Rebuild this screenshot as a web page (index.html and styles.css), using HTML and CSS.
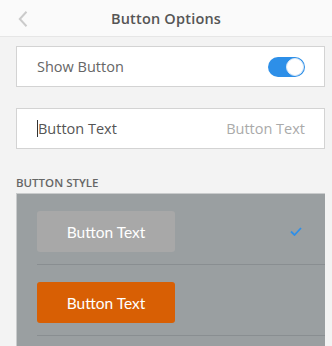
FILE: index.html
```html
<!DOCTYPE html>
<html lang="en">

<head>
  <meta charset="UTF-8">
  <meta name="viewport" content="width=device-width, initial-scale=1.0">
  <title>Button Options</title>
  <link rel="stylesheet" href="styles.css">
</head>

<body>
  <div class="header">
    <span class="back">
      <svg width="10" height="16" viewBox="0 0 10 16">
        <path d="M8.5 0.8 L1.8 8 L8.5 15.2" fill="none" stroke="#cbcbcb" stroke-width="2" />
      </svg>
    </span>
    <h1>Button Options</h1>
  </div>

  <div class="content">
    <div class="field">
      <span class="label">Show Button</span>
      <span class="toggle"><span class="knob"></span></span>
    </div>

    <div class="field text-field">
      <span class="value"><span class="caret"></span>Button Text</span>
      <span class="hint">Button Text</span>
    </div>

    <div class="section-title">BUTTON STYLE</div>

    <div class="styles-panel">
      <div class="style-row">
        <span class="btn btn-gray">Button Text</span>
        <svg class="check" width="12" height="9" viewBox="0 0 12 9">
          <path d="M1 4.5 L4.5 8 L11 1" fill="none" stroke="#2f8fe8" stroke-width="1.8" />
        </svg>
      </div>
      <div class="style-row">
        <span class="btn btn-orange">Button Text</span>
      </div>
    </div>
  </div>
</body>

</html>
```

FILE: styles.css
```css
body {
  margin: 0;
  padding: 0;
  font-family: "Open Sans", Arial, sans-serif;
  background: #f3f3f3;
  overflow: hidden;
}

.header {
  height: 36px;
  background: #fafafa;
  border-bottom: 1px solid #e6e6e6;
  display: flex;
  align-items: center;
  justify-content: center;
  position: relative;
}

.back {
  position: absolute;
  left: 18px;
  top: 10px;
}

h1 {
  margin: 0;
  font-size: 14.5px;
  font-weight: 600;
  color: #555;
  letter-spacing: 0.2px;
}

.content {
  padding: 9px 7px 0 16px;
}

.field {
  height: 39px;
  background: #fff;
  border: 1px solid #d3d3d3;
  display: flex;
  align-items: center;
  justify-content: space-between;
  padding: 0 19px 0 20px;
  margin-bottom: 21px;
  font-size: 14.5px;
  color: #666;
}

.toggle {
  width: 37px;
  height: 20px;
  border-radius: 10px;
  background: #2d8fe8;
  position: relative;
}

.knob {
  position: absolute;
  right: 1px;
  top: 1px;
  width: 16px;
  height: 16px;
  border-radius: 50%;
  background: #fff;
  border: 1px solid #d9e8f7;
}

.text-field {
  margin-bottom: 26px;
}

.value {
  color: #555;
  display: flex;
  align-items: center;
}

.caret {
  width: 1px;
  height: 17px;
  background: #333;
}

.hint {
  color: #aaa;
}

.section-title {
  font-size: 11.5px;
  font-weight: 600;
  color: #666;
  margin-bottom: 3px;
}

.styles-panel {
  background: #9a9fa1;
  border-top: 1px solid #c9cbcc;
  border-left: 1px solid #c9cbcc;
  padding-left: 20px;
  height: 160px;
}

.style-row {
  padding: 17px 23px 12px 0;
  border-bottom: 1px solid #898e91;
  display: flex;
  align-items: center;
  justify-content: space-between;
}

.btn {
  width: 138px;
  height: 41px;
  border-radius: 3px;
  display: flex;
  align-items: center;
  justify-content: center;
  font-family: Lato, "Open Sans", sans-serif;
  font-size: 15.5px;
  color: #fff;
}

.btn-gray {
  background: #a8a8a8;
}

.btn-orange {
  background: #d85f04;
}
```
